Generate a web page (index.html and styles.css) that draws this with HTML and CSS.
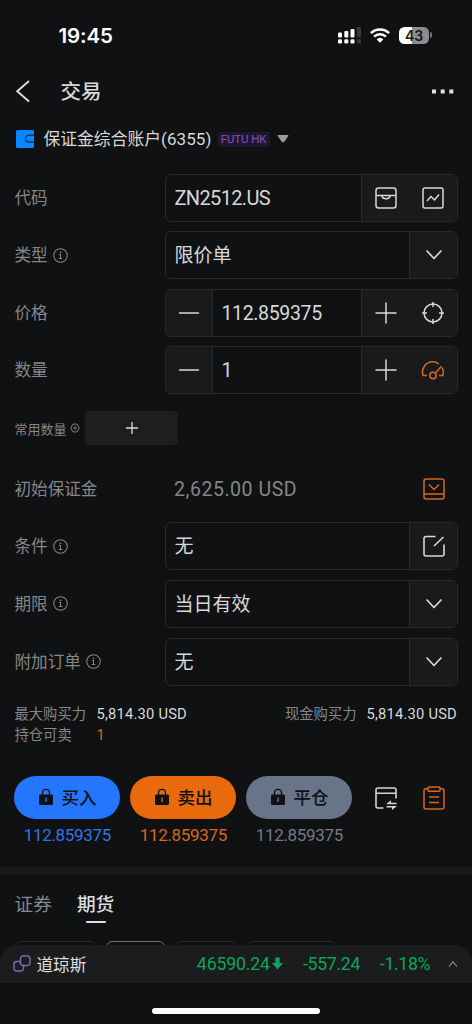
FILE: index.html
```html
<!DOCTYPE html>
<html lang="zh-CN">
<head>
<meta charset="utf-8">
<title>交易</title>
<link rel="stylesheet" href="styles.css">
</head>
<body>
<svg class="defs" width="0" height="0">
  <symbol id="info" viewBox="0 0 16 16"><g fill="none" stroke="currentColor" stroke-width="1.1"><circle cx="8" cy="8" r="7.200"/><path d="M6.500 7H8v4.300M6.200 11.300h3.700"/></g><circle cx="8" cy="4.600" r=".9" fill="currentColor"/></symbol>
  <symbol id="down" viewBox="0 0 24 24"><path d="M5 8l7 7.500 7-7.500" fill="none" stroke="currentColor" stroke-width="1.700" stroke-linecap="round" stroke-linejoin="round"/></symbol>
  <symbol id="minus" viewBox="0 0 24 24"><path d="M2.500 12h19" stroke="currentColor" stroke-width="1.500" stroke-linecap="round"/></symbol>
  <symbol id="plus" viewBox="0 0 24 24"><path d="M2 12h20M12 2v20" stroke="currentColor" stroke-width="1.500" stroke-linecap="round"/></symbol>
  <symbol id="lock" viewBox="0 0 16 18"><path d="M4.500 8V4.800a3.500 3.500 0 0 1 7 0V8" fill="none" stroke="currentColor" stroke-width="1.300"/><path fill="currentColor" fill-rule="evenodd" d="M2.500 6.500h11a1.500 1.500 0 0 1 1.500 1.500v7.500a1.500 1.500 0 0 1-1.500 1.500h-11A1.500 1.500 0 0 1 1 15.500V8a1.500 1.500 0 0 1 1.500-1.500zM7.300 9.500v4.500h1.400V9.500z"/></symbol>
</svg>
<div class="screen">
  <header class="status">
    <span class="time">19:45</span>
    <svg class="signal" width="25" height="17" viewBox="0 0 25 17" fill="#fff"><rect x="1" y="5.500" width="4" height="5" rx="1"/><rect x="7.300" y="4" width="4" height="6.500" rx="1"/><rect x="13.500" y="2" width="4" height="8.500" rx="1"/><rect x="20" y="0" width="4" height="10.500" rx="1" fill="#38393b"/><rect x="1" y="12.300" width="4" height="4.200" rx="1.300"/><rect x="7.300" y="12.300" width="4" height="4.200" rx="1.300"/><rect x="13.500" y="12.300" width="4" height="4.200" rx="1.300"/><rect x="20" y="12.300" width="4" height="4.200" rx="1.300" fill="#38393b"/></svg>
    <svg class="wifi" width="20" height="15" viewBox="0 0 20 15" fill="none" stroke="#fff" stroke-width="2.500"><path d="M.9 5.200a13 13 0 0 1 18.200 0M4.100 8.700a8.500 8.500 0 0 1 11.800 0"/><path d="M10 14.700L6.700 11.400a4.800 4.800 0 0 1 6.600 0z" fill="#fff" stroke="none"/></svg>
    <span class="battery"><b>43</b></span><i class="nub"></i>
  </header>
  <nav class="nav">
    <svg width="16" height="24" viewBox="0 0 16 24" fill="none" stroke="#e2e2e3" stroke-width="1.800"><path d="M14 2L2.200 12.200 14 22.500"/></svg>
    <h1>交易</h1>
    <svg class="more" width="22" height="5" viewBox="0 0 22 5" fill="#e2e2e3"><path d="M0 .5h4v4H0zM8.700.5h4v4h-4zM17.300.5h4v4h-4z"/></svg>
  </nav>
  <div class="account">
    <svg width="18" height="18" viewBox="0 0 18 18"><path fill="#0987ff" d="M1.500 0h15A1.500 1.500 0 0 1 18 1.500v15a1.500 1.500 0 0 1-1.500 1.500h-15A1.500 1.500 0 0 1 0 16.500v-15A1.500 1.500 0 0 1 1.500 0z"/><path d="M18 5.300h-5a3.500 3.500 0 0 0 0 7h5" fill="none" stroke="#073b70" stroke-width="1.500"/></svg>
    <span class="account-name">保证金综合账户<em>(6355)</em></span>
    <span class="tag">FUTU HK</span>
    <svg width="12" height="8" viewBox="0 0 12 8"><path d="M1 .5h10L6.800 6.800H5.200z" fill="#999a9b" stroke="#999a9b" stroke-linejoin="round"/></svg>
  </div>

  <section class="rows">
    <div class="row"><span class="label">代码</span>
      <div class="field"><span class="value symbol">ZN2512.US</span><div class="tools">
        <svg viewBox="0 0 24 24" fill="none" stroke="currentColor" stroke-width="1.500"><rect x="2" y="2" width="20" height="20" rx="2.500"/><path d="M2 9.500h6c0 4.300 8 4.300 8 0h6M8 9.500h8"/></svg>
        <svg viewBox="0 0 24 24" fill="none" stroke="currentColor" stroke-width="1.500"><rect x="2" y="2" width="20" height="20" rx="2"/><path d="M6 15l4-4.500 3.500 3.500L18 8.500"/></svg></div></div></div>
    <div class="row"><span class="label">类型<svg><use href="#info"/></svg></span>
      <div class="field"><span class="value">限价单</span><div class="tools one"><svg><use href="#down"/></svg></div></div></div>
    <div class="row"><span class="label">价格</span>
      <div class="field"><div class="tools first"><svg><use href="#minus"/></svg></div><span class="value num">112.859375</span><div class="tools"><svg><use href="#plus"/></svg>
        <svg viewBox="0 0 24 24" fill="none" stroke="currentColor" stroke-width="1.500"><circle cx="12" cy="12" r="9"/><path d="M12 1v5M12 18v5M1 12h5M18 12h5"/></svg></div></div></div>
    <div class="row"><span class="label">数量</span>
      <div class="field"><div class="tools first"><svg><use href="#minus"/></svg></div><span class="value num">1</span><div class="tools"><svg><use href="#plus"/></svg>
        <svg class="orange" viewBox="0 0 24 24" fill="none" stroke="currentColor" stroke-width="1.500"><path d="M6 17.500H2C-.2 10.500 5 3.800 11.500 3.800c2.500 0 4.500.7 6.200 2M21.200 9.700c1.300 2.500 1.300 5 .8 7.800h-4M14.200 15.200l6.300-7"/><circle cx="12" cy="17.500" r="3.200"/></svg></div></div></div>
  </section>

  <div class="quick"><span>常用数量</span>
    <svg width="10" height="10" viewBox="0 0 12 12" fill="none" stroke="#858687" stroke-width="1.200"><path d="M3.700 1.300h4.600L11.200 6l-2.900 4.700H3.700L.8 6z"/><circle cx="6" cy="6" r="1.400"/></svg>
    <button><svg width="14" height="14" viewBox="0 0 14 14"><path d="M1 7h12M7 1v12" stroke="currentColor" stroke-width="1.300"/></svg></button></div>

  <div class="margin"><span class="label">初始保证金</span><span class="amount">2,625.00 USD</span>
    <svg class="orange" width="24" height="24" viewBox="0 0 24 24" fill="none" stroke="currentColor" stroke-width="1.500"><rect x="2" y="2" width="20" height="20" rx="2"/><path d="M2 17h20M7 7.500l5 5 5-5"/></svg></div>

  <section class="rows terms">
    <div class="row"><span class="label">条件<svg><use href="#info"/></svg></span>
      <div class="field"><span class="value">无</span><div class="tools one"><svg viewBox="0 0 24 24" fill="none" stroke="currentColor" stroke-width="1.600"><path d="M13.500 2.500H4A2 2 0 0 0 2 4.500V20a2 2 0 0 0 2 2h16a2 2 0 0 0 2-2v-9.500M12 12l9.500-9"/></svg></div></div></div>
    <div class="row"><span class="label">期限<svg><use href="#info"/></svg></span>
      <div class="field"><span class="value">当日有效</span><div class="tools one"><svg><use href="#down"/></svg></div></div></div>
    <div class="row"><span class="label">附加订单<svg><use href="#info"/></svg></span>
      <div class="field"><span class="value">无</span><div class="tools one"><svg><use href="#down"/></svg></div></div></div>
  </section>

  <div class="power">
    <span>最大购买力</span><b>5,814.30 USD</b><span class="cash">现金购买力</span><b>5,814.30 USD</b>
    <span>持仓可卖</span><b class="held">1</b>
  </div>

  <div class="actions">
    <div class="action buy"><button><svg><use href="#lock"/></svg>买入</button><span>112.859375</span></div>
    <div class="action sell"><button><svg><use href="#lock"/></svg>卖出</button><span>112.859375</span></div>
    <div class="action close"><button><svg><use href="#lock"/></svg>平仓</button><span>112.859375</span></div>
    <svg class="side" viewBox="0 0 24 24" fill="none" stroke="#d5d5d6" stroke-width="1.600"><path d="M9.500 22H4a2 2 0 0 1-2-2V4a2 2 0 0 1 2-2h16a2 2 0 0 1 2 2v8.500M2 7.300h20"/><path d="M12 18.200l5-4v2.500h5.500v1.500zM23 20l-5 4v-2.500h-5.500V20z" fill="#d5d5d6" stroke="none"/></svg>
    <svg class="side list orange" viewBox="0 0 24 24" fill="none" stroke="currentColor" stroke-width="1.500"><path d="M6 2.800H4a2 2 0 0 0-2 2V21a2 2 0 0 0 2 2h16a2 2 0 0 0 2-2V4.800a2 2 0 0 0-2-2h-2M7 11h10M7 16.500h10"/><rect x="6" y="1" width="12" height="4.300" rx="1"/></svg>
  </div>

  <div class="separator"></div>
  <div class="tabs"><span>证券</span><span class="active">期货</span></div>
  <div class="chips"><i></i><i class="on"></i><i></i><i></i></div>
  <footer class="ticker">
    <svg class="link" width="18" height="18" viewBox="0 0 18 18" fill="none" stroke="#7d68b0" stroke-width="1.500"><path d="M11 10.500h3.500A2.500 2.500 0 0 0 17 8V3.500A2.500 2.500 0 0 0 14.500 1H10a2.500 2.500 0 0 0-2.500 2.500V8"/><path d="M7 6.500H3.500A2.500 2.500 0 0 0 1 9v4.500A2.500 2.500 0 0 0 3.500 16H8a2.500 2.500 0 0 0 2.500-2.500V9.800"/><path d="M7.500 7.800a2.500 2.500 0 0 0 2.500 2.700h1"/></svg>
    <span class="index">道琼斯</span>
    <span class="price">46590.24</span><svg class="arrow" width="11" height="13" viewBox="0 0 11 13"><path fill="#0ba55a" d="M3.300.5h4.400V6H11l-5.500 6.500L0 6h3.300z"/></svg>
    <span class="change">-557.24</span><span class="percent">-1.18%</span>
    <svg width="10" height="8" viewBox="0 0 10 8" fill="none" stroke="#7b7c7d" stroke-width="1.300"><path d="M1 6.500l4-4.700 4 4.700"/></svg>
  </footer>
  <div class="home"></div>
</div>
</body>
</html>
```

FILE: styles.css
```css
* { box-sizing: border-box; }
body { margin: 0; background: #101113; color: #d8d8d9; font-family: Roboto, "Noto Sans CJK SC", sans-serif; }
.defs { position: absolute; }
svg { display: block; flex: none; }
button { border: 0; padding: 0; font: inherit; color: inherit; }
h1, b, em, i { font-style: normal; font-weight: 400; }
.screen { width: 472px; height: 1024px; overflow: hidden; display: flex; flex-direction: column; }
.screen > * { flex: none; }
.orange { color: #d8671b; }

.status { height: 70px; display: flex; align-items: center; padding-left: 58.500px; color: #fff; }
.time { width: 278.500px; padding-top: 1px; font: 600 20.500px/24px Inter, sans-serif; letter-spacing: -.1px; }
.wifi { margin-left: 8px; }
.battery { margin-left: 9px; width: 30px; height: 17px; border-radius: 5.500px; background: linear-gradient(90deg, #fff 44%, #8b8c8d 44%); text-align: center; color: #18191a; }
.battery b { display: block; font: 600 14px/17px Inter, sans-serif; }
.nub { width: 2px; height: 6px; margin-left: 1px; border-radius: 0 2px 2px 0; background: #747576; }

.nav { height: 42px; display: flex; align-items: center; padding: 0 18px 0 14.500px; }
.nav h1 { margin: 0 auto 0 30px; padding-top: 2px; font-size: 20.500px; line-height: 28px; font-weight: 500; }
.account { height: 54px; display: flex; align-items: center; padding-left: 15.500px; }
.account-name { margin-left: 10px; width: 169px; font-size: 16.800px; line-height: 24px; white-space: nowrap; }
.account-name em { font-size: 17px; letter-spacing: .1px; }
.tag { width: 52px; height: 15px; margin: 0 7px 0 5px; border-radius: 3px; background: #21162f; color: #8055bd; font-size: 11.500px; line-height: 15px; text-align: center; white-space: nowrap; letter-spacing: -.1px; }

.rows { display: flex; flex-direction: column; gap: 9.600px; padding: 7.600px 14.500px 0; }
.row { height: 48px; display: flex; align-items: center; }
.label { width: 150px; padding-top: 2px; display: flex; align-items: center; gap: 5px; font-size: 16.600px; line-height: 24px; color: #858687; }
.label svg { width: 15px; height: 15px; margin-top: -2px; }
.field { flex: 1; height: 48px; display: flex; border: 1px solid #292a2c; border-radius: 6px; overflow: hidden; }
.value { flex: 1; padding: 1px 0 0 9px; font-size: 19px; line-height: 46px; }
.value.num { font-size: 19.500px; letter-spacing: -.35px; }
.value.symbol { padding-top: 0; font-size: 20px; letter-spacing: -.65px; }
.tools { width: 96px; padding-left: 1px; display: flex; align-items: center; justify-content: space-around; background: #191a1c; border-left: 1px solid #292a2c; }
.tools.one { width: 48px; }
.tools.first { width: 47px; padding-left: 0; border-left: 0; border-right: 1px solid #292a2c; }
.tools svg { width: 24px; height: 24px; }

.quick { height: 34px; margin-top: 17px; display: flex; align-items: center; padding-left: 14.500px; color: #858687; font-size: 13px; }
.quick > svg { margin-left: 3px; }
.quick button { width: 93px; height: 34px; margin-left: 5.500px; display: grid; place-items: center; background: #1d1e20; border-radius: 5px; color: #dededf; }
.margin { height: 48px; margin-top: 20px; display: flex; align-items: center; padding: 0 26.500px 0 14.500px; color: #858687; }
.amount { margin-left: 9.500px; margin-right: auto; padding-top: 1px; font-size: 19.500px; line-height: 28px; letter-spacing: .55px; }
.terms { padding-top: 9px; }

.power { margin: 18px 14.500px 0; display: grid; grid-template-columns: 82px 1fr auto 91px; line-height: 21.700px; font-size: 14.300px; color: #858687; white-space: nowrap; }
.power b { color: #d8d8d9; font-size: 14.700px; letter-spacing: .22px; }
.power .cash { margin-right: 10px; }
.power .held { color: #d8671b; }

.actions { height: 91px; margin-top: 29px; display: flex; align-items: flex-start; padding-left: 14.400px; gap: 10px; }
.action { width: 106px; text-align: center; color: #101113; }
.action button { width: 106px; height: 43px; border-radius: 22px; display: flex; align-items: center; justify-content: center; gap: 7px; padding-top: 1px; font-size: 17.500px; font-weight: 500; line-height: 24px; }
.action button svg { width: 16px; height: 18px; margin-top: -2px; }
.action span { display: block; font-size: 17px; line-height: 24px; margin-top: 4px; letter-spacing: -.3px; }
.buy button { background: #2476ff; }
.buy span { color: #3276e6; }
.sell button { background: #e9690d; }
.sell span { color: #d8671b; }
.close button { background: #687488; }
.close span { color: #747a84; }
.side { width: 24px; height: 24px; margin: 10px 0 0 11.500px; }
.side.list { margin-left: 14px; }

.separator { height: 7px; background: #191a1c; }
.tabs { height: 67px; padding: 17px 14.500px 0; display: flex; gap: 25px; font-size: 18.700px; line-height: 28px; color: #858687; }
.tabs .active { color: #dededf; font-weight: 500; }
.tabs .active::after { content: ""; display: block; width: 20px; height: 2.500px; margin: 2px auto 0; border-radius: 2px; background: #dededf; }
.chips { height: 4px; display: flex; gap: 10px; padding-left: 15px; overflow: hidden; }
.chips i { height: 28px; flex: none; width: 81px; border: 1px solid #2a2b2d; border-radius: 6px; }
.chips i.on { width: 59px; border-color: #737475; }
.chips i:nth-child(3) { width: 61px; }
.chips i:nth-child(4) { width: 90px; }
.ticker { height: 38px; display: flex; align-items: center; padding: 0 14px 0 12.500px; border-radius: 18px 18px 0 0; background: #1b1c1e; color: #0ba55a; font-size: 17.700px; letter-spacing: -.15px; }
.index { margin: 0 auto 0 6px; padding-top: 1px; color: #dededf; font-size: 16.600px; letter-spacing: 0; }
.arrow { margin: 0 20px 0 2px; }
.change { letter-spacing: -.3px; }
.percent { margin: 0 18px 0 20px; letter-spacing: -.4px; }
.home { width: 168px; height: 6px; margin: 25px auto 0; border-radius: 3px; background: #fff; }
```
